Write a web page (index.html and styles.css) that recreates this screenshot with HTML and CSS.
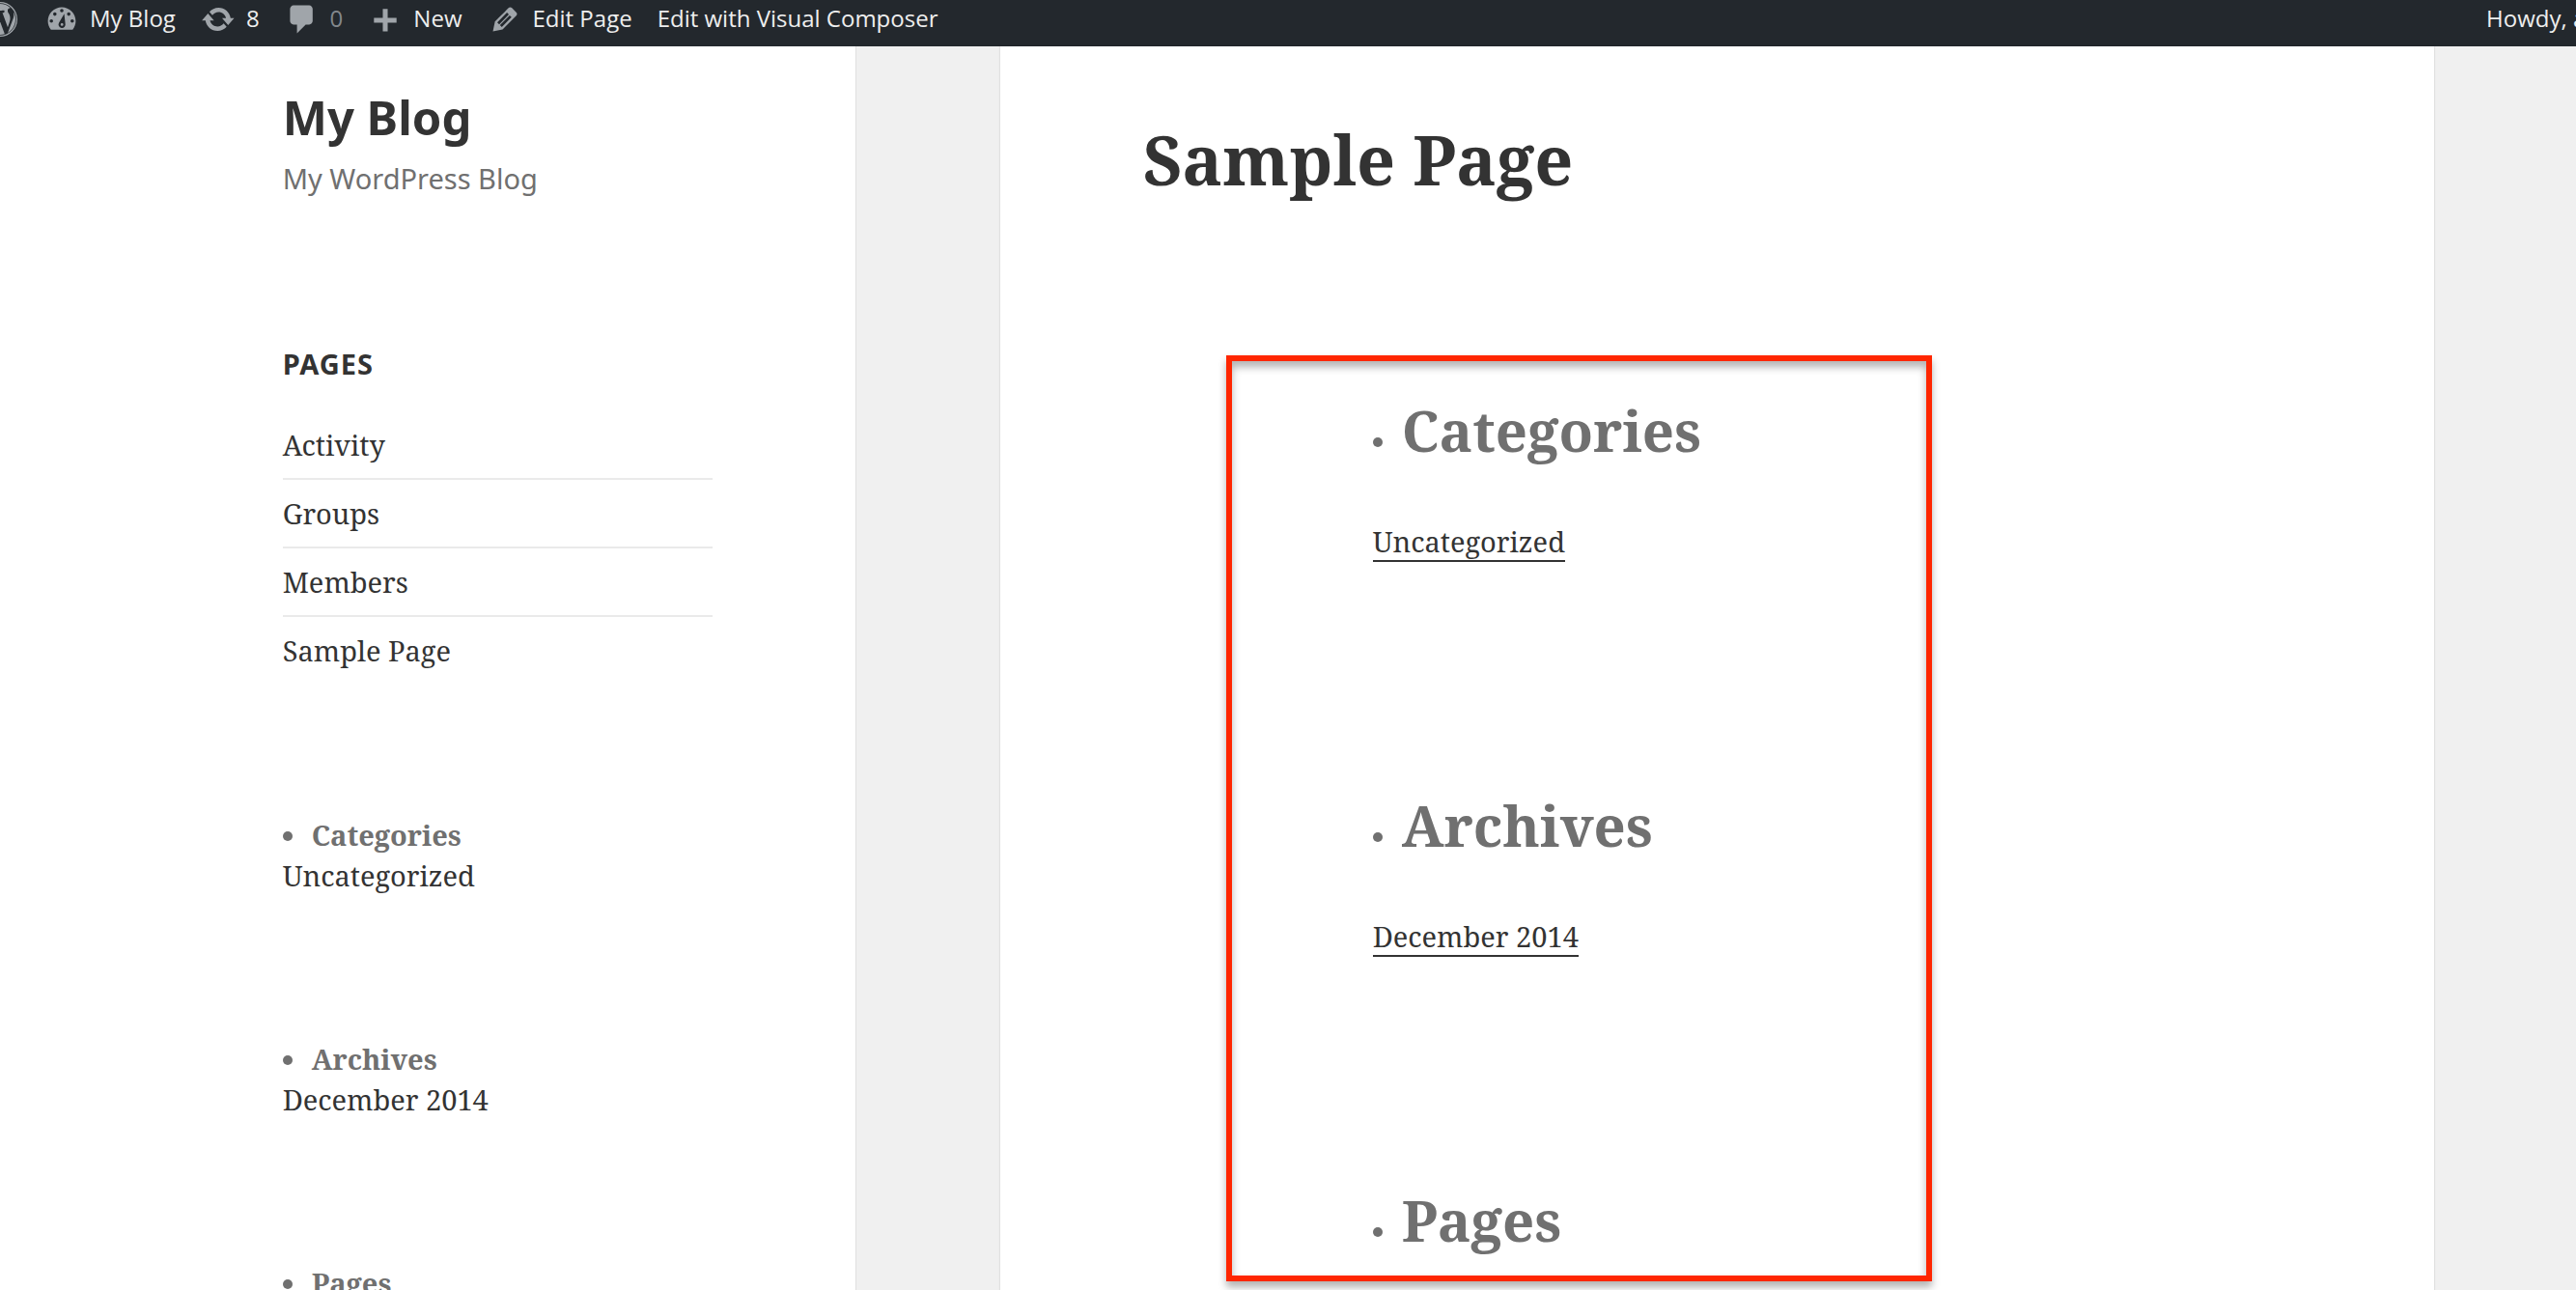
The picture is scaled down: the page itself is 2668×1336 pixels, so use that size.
FILE: index.html
```html
<!DOCTYPE html>
<html lang="en">
<head>
<meta charset="utf-8">
<title>Sample Page - My Blog</title>
<link rel="stylesheet" href="styles.css">
</head>
<body>
<nav class="adminbar" aria-label="Toolbar">
  <a class="bar-item bar-logo" href="#" aria-label="About WordPress"><svg class="icon-logo" viewBox="0 0 20 20"><path fill-rule="evenodd" d="M10 0a10 10 0 1 0 0 20 10 10 0 0 0 0-20zm0 .7a9.300 9.300 0 1 1 0 18.600 9.300 9.300 0 0 1 0-18.600z"/><path d="M17.410 10c.24-.64.74-1.870.43-4.250.7 1.290 1.050 2.710 1.050 4.250 0 3.290-1.730 6.240-4.400 7.780.97-2.590 1.940-5.200 2.920-7.780zM10.130 11.460l2.580 6.980c-.86.29-1.760.45-2.710.45-.79 0-1.570-.11-2.290-.33.81-2.380 1.620-4.740 2.420-7.100zM7.780 15.370L4.370 6.220c.55-.02 1.170-.08 1.170-.08.5-.06.44-1.130-.06-1.110 0 0-1.450.11-2.370.11-.18 0-.37 0-.58-.01C4.120 2.690 6.870 1.110 10 1.110c2.330 0 4.450.87 6.050 2.340-.68-.11-1.650.39-1.650 1.580 0 .74.45 1.360.9 2.100.35.61.55 1.360.55 2.460 0 1.490-1.400 5-1.400 5l-3.030-8.370c.54-.02.82-.17.82-.17.5-.05.44-1.250-.06-1.220 0 0-1.440.12-2.380.12-.87 0-2.330-.12-2.330-.12-.5-.03-.56 1.200-.06 1.220l.92.08 1.260 3.410z"/></svg></a>
  <a class="bar-item" href="#"><svg class="icon" viewBox="0 0 20 20"><path fill-rule="evenodd" d="M3.760 16h12.480c1.100-1.370 1.760-3.110 1.760-5 0-4.420-3.580-8-8-8s-8 3.580-8 8c0 1.890.66 3.630 1.760 5zM10 4a1 1 0 1 1 0 2 1 1 0 0 1 0-2zM6 6a1 1 0 1 1 0 2 1 1 0 0 1 0-2zm8 0a1 1 0 1 1 0 2 1 1 0 0 1 0-2zM4 10a1 1 0 1 1 0 2 1 1 0 0 1 0-2zm12 0a1 1 0 1 1 0 2 1 1 0 0 1 0-2zM11.400 6.800l.6 5.600a2 2 0 1 1-3.600-.500zM10.100 12.200a.8.800 0 1 0 0 1.600.8.800 0 0 0 0-1.600z"/></svg>My Blog</a>
  <a class="bar-item" href="#"><svg class="icon" viewBox="0 0 20 20"><path d="M10.200 3.280c3.530 0 6.430 2.610 6.920 6h2.080l-3.500 4-3.500-4h2.320c-.45-1.970-2.210-3.450-4.320-3.450-1.450 0-2.730.71-3.540 1.780L4.950 5.660C6.230 4.210 8.110 3.280 10.200 3.280zM9.600 16.720c-3.520 0-6.430-2.610-6.920-6H.6l3.500-4 3.500 4H5.280c.45 1.970 2.210 3.450 4.320 3.450 1.450 0 2.730-.71 3.540-1.780l1.710 1.950c-1.280 1.450-3.170 2.380-5.250 2.380z"/></svg>8</a>
  <a class="bar-item bar-muted" href="#"><svg class="icon" viewBox="0 0 20 20"><path d="M5 2h9q.82 0 1.410.59T16 4v7q0 .82-.59 1.410T14 13h-2l-5 5v-5H5q-.82 0-1.410-.59T3 11V4q0-.82.59-1.410T5 2z"/></svg>0</a>
  <a class="bar-item" href="#"><svg class="icon" viewBox="0 0 20 20"><path d="M8.600 4h2.800v5.100H16.500v2.800h-5.100V17H8.600v-5.100H3.500V9.100h5.100z"/></svg>New</a>
  <a class="bar-item" href="#"><svg class="icon" viewBox="0 0 20 20"><path fill-rule="evenodd" d="M13.890 3.390l2.710 2.720c.46.46.42 1.240.03 1.640l-8.010 8.020-5.560 1.160 1.160-5.580s7.600-7.630 7.990-8.030c.39-.39 1.220-.39 1.680.07zM11.160 6.180l-5.590 5.610 1.110 1.110 5.540-5.650zM8.190 14.410l5.580-5.600-1.070-1.080-5.590 5.600z"/></svg>Edit Page</a>
  <a class="bar-item" href="#">Edit with Visual Composer</a>
  <a class="bar-item bar-account" href="#">Howdy, admin</a>
</nav>
<div class="site">
  <aside class="sidebar">
    <header class="branding">
      <p class="site-title"><a href="#">My Blog</a></p>
      <p class="site-description">My WordPress Blog</p>
    </header>
    <section class="nav-widget">
      <h2 class="nav-title">Pages</h2>
      <ul class="nav-list">
        <li><a href="#">Activity</a></li>
        <li><a href="#">Groups</a></li>
        <li><a href="#">Members</a></li>
        <li><a href="#">Sample Page</a></li>
      </ul>
    </section>
    <ul class="widgets">
      <li><h2 class="widget-title">Categories</h2><ul class="widget-list"><li><a href="#">Uncategorized</a></li></ul></li>
      <li><h2 class="widget-title">Archives</h2><ul class="widget-list"><li><a href="#">December 2014</a></li></ul></li>
      <li><h2 class="widget-title">Pages</h2></li>
    </ul>
  </aside>
  <main class="content">
    <h1 class="entry-title">Sample Page</h1>
    <div class="highlight">
      <ul class="widgets widgets-large">
        <li><h2 class="widget-title">Categories</h2><ul class="widget-list"><li><a href="#">Uncategorized</a></li></ul></li>
        <li><h2 class="widget-title">Archives</h2><ul class="widget-list"><li><a href="#">December 2014</a></li></ul></li>
        <li><h2 class="widget-title">Pages</h2></li>
      </ul>
    </div>
  </main>
</div>
</body>
</html>
```
FILE: styles.css
```css
* { box-sizing: border-box; }
html, body { height: 100%; }
body {
  margin: 0;
  display: flex;
  flex-direction: column;
  overflow: hidden;
  background: #f0f0f0;
  color: #707070;
  font: 29px/42px "Noto Serif", "DejaVu Serif", serif;
}
a { color: #333; text-decoration: none; }
h1, h2, p, ul { margin: 0; padding: 0; }

.adminbar {
  display: flex;
  flex: none;
  gap: 26px;
  height: 48px;
  background: #23282d;
  white-space: nowrap;
  overflow: hidden;
  font: 24px/38px "Open Sans", sans-serif;
}
.bar-item { display: flex; gap: 11px; color: #eee; }
.bar-muted { color: #82878c; }
.bar-account { margin-left: auto; margin-right: -68px; }
.icon, .icon-logo { flex: none; width: 36px; height: 40px; fill: #a0a5aa; }
.bar-logo { margin: 0 2px 0 -18px; }

.site { display: flex; flex: 1 0 auto; align-items: stretch; }
.sidebar {
  flex: none;
  width: 33.25%;
  padding: 40px 148px 0 10.97%;
  background: #fff;
  border-right: 1px solid #e0e0e0;
}
.site-title { font: bold 49px/66px "Noto Sans", sans-serif; }
.site-description { font: 29px/42px "Noto Sans", sans-serif; margin-top: 10px; }
.nav-widget { margin-top: 150px; }
.nav-title { font: bold 29px/42px "Noto Sans", sans-serif; text-transform: uppercase; letter-spacing: 1px; color: #333; }
.nav-list { list-style: none; margin-top: 28px; }
.nav-list li { padding: 14px 0 13px; border-bottom: 2px solid #eaeaea; }
.nav-list li:last-child { border: 0; }

.widgets { list-style: disc inside; margin-top: 136px; }
.widgets > li { margin-bottom: 148px; }
.widget-title { display: inline; margin-left: -10px; font-size: 29px; }
.widget-list { list-style: none; }

.content {
  flex: 1;
  margin: 0 5.5% 0 5.57%;
  padding: 75px 148px;
  background: #fff;
  box-shadow: 0 0 2px rgba(0, 0, 0, .2);
}
.entry-title { font-size: 70px; line-height: 84px; color: #333; }
.highlight {
  width: 61.5%;
  margin: 161px 0 0 86px;
  padding: 36px 146px 21px;
  border: 6px solid #ff2600;
  box-shadow: 0 6px 8px rgba(0, 0, 0, .3), inset 0 6px 8px rgba(0, 0, 0, .3);
}
.widgets-large { margin: 0; }
.widgets-large > li { margin-bottom: 237px; }
.widgets-large > li:last-child { margin: 0; }
.widgets-large .widget-title { font-size: 58px; line-height: 72px; }
.widgets-large .widget-list { margin-top: 58px; }
.widgets-large .widget-list a { border-bottom: 2px solid #333; }
```
